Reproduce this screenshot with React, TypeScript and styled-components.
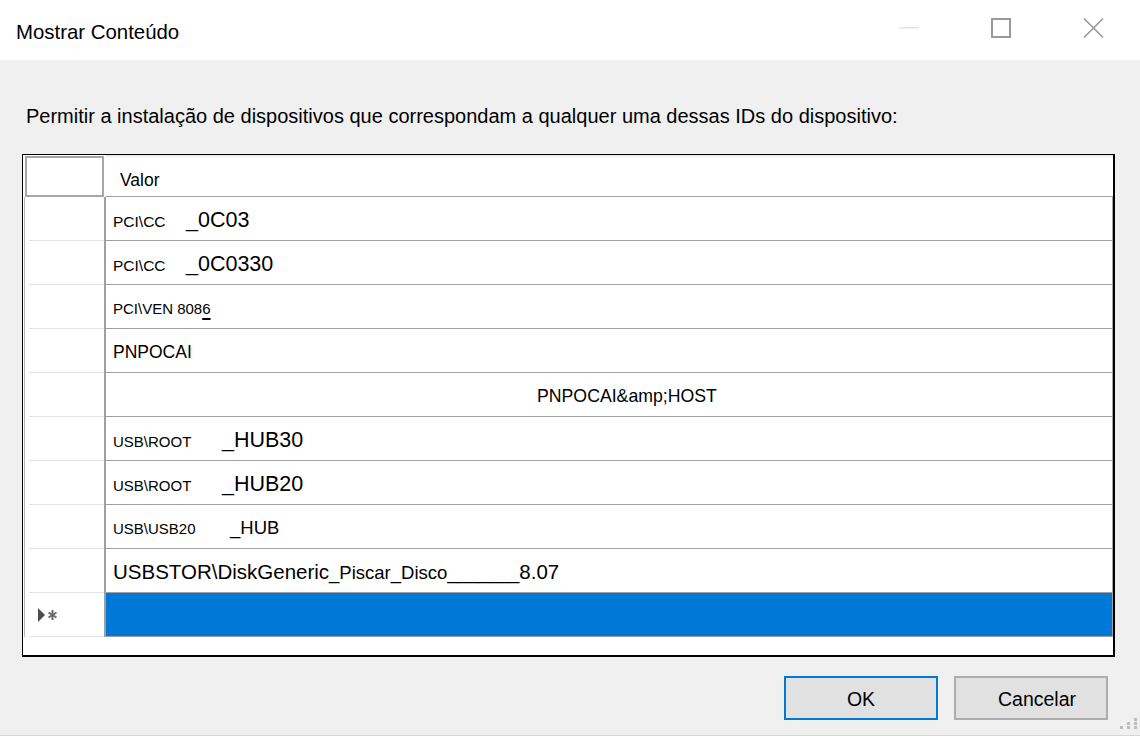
import React from "react";
import styled, { createGlobalStyle } from "styled-components";

const GlobalStyle = createGlobalStyle`
  html, body { margin: 0; padding: 0; }
  body {
    background: #f0f0f0;
    font-family: "Liberation Sans", Arial, sans-serif;
    color: #000;
  }
`;

const Window = styled.div`
  position: relative;
  width: 1140px;
  height: 736px;
  background: #f0f0f0;
  overflow: hidden;
  display: flex;
  flex-direction: column;
  border-bottom: 1px solid #d6d6d6;
  box-sizing: border-box;
`;

const TitleBar = styled.div`
  height: 60px;
  flex: none;
  background: #fff;
  display: flex;
  align-items: center;
  padding-left: 16px;
  box-sizing: border-box;
`;

const Title = styled.div`
  flex: 1;
  font-size: 20.4px;
  padding-top: 5px;
`;

const Controls = styled.div`
  align-self: flex-start;
  margin-top: 18px;
  margin-right: 1px;
  display: flex;
`;

const ControlButton = styled.div`
  width: 92px;
  height: 20px;
  display: flex;
  justify-content: center;
`;

const Body = styled.div`
  flex: 1;
  display: flex;
  flex-direction: column;
  padding: 44px 0 0 22px;
`;

const Prompt = styled.div`
  font-size: 20px;
  line-height: 24px;
  padding-left: 4px;
`;

const Grid = styled.div`
  margin-top: 26px;
  width: 1093px;
  height: 503px;
  box-sizing: border-box;
  background: #fff;
  border-style: solid;
  border-color: #000;
  border-width: 1px 2px 2px 1px;
  padding-left: 1px;
  display: flex;
  flex-direction: column;
`;

const Row = styled.div<{ $h: number }>`
  display: grid;
  grid-template-columns: 82px 1007px;
  height: ${(p) => p.$h}px;
`;

const Corner = styled.div`
  margin: 1px 2px 0 1px;
  border: 2px solid #a6a6a6;
  box-sizing: border-box;
`;

const HeaderCell = styled.div`
  border-top: 2px solid #ececec;
  border-bottom: 1px solid #a0a0a0;
  font-size: 17.5px;
  padding: 7px 0 0 14px;
  display: flex;
  align-items: center;
  box-sizing: border-box;
`;

const RowHead = styled.div`
  box-sizing: border-box;
  border-left: 1px solid #b8b8b8;
  border-right: 2px solid #a0a0a0;
  background: linear-gradient(#e3e3e3, #e3e3e3) no-repeat 4px 100% / calc(100% - 4px) 1px, #fff;
  display: flex;
  align-items: center;
  padding-left: 12px;
`;

const Cell = styled.div<{ $selected?: boolean; $indent?: number }>`
  box-sizing: border-box;
  border-right: 1px solid #a0a0a0;
  border-bottom: 1px solid #a0a0a0;
  background: ${(p) => (p.$selected ? "#0078d7" : "#fff")};
  display: flex;
  align-items: center;
  padding-top: 3px;
  padding-left: ${(p) => p.$indent ?? 7}px;
`;

const Line = styled.div`
  display: flex;
  align-items: baseline;
  white-space: pre;
`;

const Seg = styled.span<{ $size: number; $w?: number }>`
  font-size: ${(p) => p.$size}px;
  ${(p) => (p.$w ? `display: inline-block; width: ${p.$w}px;` : "")}
`;

const Under = styled.span`
  text-decoration: underline;
  text-decoration-thickness: 1.5px;
  text-underline-offset: 4px;
`;

const Filler = styled.div`
  flex: 1;
`;

const ButtonRow = styled.div`
  margin-top: 19px;
  display: flex;
  justify-content: flex-end;
  gap: 16px;
  padding-right: 32px;
`;

const Button = styled.div<{ $primary?: boolean; $shift?: number }>`
  width: 154px;
  height: 44px;
  box-sizing: border-box;
  border: 2px solid ${(p) => (p.$primary ? "#0078d7" : "#adadad")};
  background: #e1e1e1;
  font-size: 19.5px;
  display: flex;
  align-items: center;
  justify-content: center;
  padding-top: 3px;
  padding-left: ${(p) => p.$shift ?? 0}px;
`;

const Grip = styled.svg`
  position: absolute;
  right: 2px;
  bottom: 5px;
`;

type Part = { t: string; s: number; w?: number; u?: string };
type Entry = { parts: Part[]; indent?: number };

const entries: Entry[] = [
  { parts: [{ t: "PCI\\CC", s: 15.5, w: 73 }, { t: "_0C03", s: 21.5 }] },
  { parts: [{ t: "PCI\\CC", s: 15.5, w: 73 }, { t: "_0C0330", s: 21.5 }] },
  { parts: [{ t: "PCI\\VEN 808", s: 15, u: "6" }] },
  { parts: [{ t: "PNPOCAI", s: 17.5 }] },
  { parts: [{ t: "PNPOCAI&amp;HOST", s: 17.7 }], indent: 431 },
  { parts: [{ t: "USB\\ROOT", s: 15, w: 109 }, { t: "_HUB30", s: 21.5 }] },
  { parts: [{ t: "USB\\ROOT", s: 15, w: 109 }, { t: "_HUB20", s: 21.5 }] },
  { parts: [{ t: "USB\\USB20", s: 15, w: 117 }, { t: "_HUB", s: 18.5 }] },
  {
    parts: [
      { t: "USBSTOR\\DiskGeneric", s: 20.5 },
      { t: "_Piscar_Disco_______", s: 18.5 },
      { t: "8.07", s: 20.5 },
    ],
  },
];

const NewRowMark = () => (
  <svg width="22" height="16" viewBox="0 0 22 16">
    <polygon points="1,1 8,8 1,15" fill="#4d4d4d" />
    <g stroke="#6a6a6a" strokeWidth="2">
      <line x1="15.5" y1="3" x2="15.5" y2="13" />
      <line x1="11.5" y1="5.5" x2="19.5" y2="10.5" />
      <line x1="11.5" y1="10.5" x2="19.5" y2="5.5" />
    </g>
  </svg>
);

export default function App() {
  return (
    <>
      <GlobalStyle />
      <Window>
        <TitleBar>
          <Title>Mostrar Conteúdo</Title>
          <Controls>
            <ControlButton>
              <svg width="20" height="20" viewBox="0 0 20 20">
                <line x1="0" y1="9.75" x2="20" y2="9.75" stroke="#e4e4e4" strokeWidth="1.5" />
              </svg>
            </ControlButton>
            <ControlButton>
              <svg width="20" height="20" viewBox="0 0 20 20">
                <rect x="1" y="1" width="18" height="18" fill="none" stroke="#999" strokeWidth="2" />
              </svg>
            </ControlButton>
            <ControlButton>
              <svg width="21" height="20" viewBox="0 0 21 20">
                <g stroke="#999" strokeWidth="1.5">
                  <line x1="1" y1="0.5" x2="20" y2="19.5" />
                  <line x1="20" y1="0.5" x2="1" y2="19.5" />
                </g>
              </svg>
            </ControlButton>
          </Controls>
        </TitleBar>

        <Body>
          <Prompt>
            Permitir a instalação de dispositivos que correspondam a qualquer uma dessas IDs do dispositivo:
          </Prompt>

          <Grid>
            <Row $h={42}>
              <Corner />
              <HeaderCell>Valor</HeaderCell>
            </Row>
            {entries.map((e, i) => (
              <Row $h={44} key={i}>
                <RowHead />
                <Cell $indent={e.indent}>
                  <Line>
                    {e.parts.map((p, j) => (
                      <Seg key={j} $size={p.s} $w={p.w}>
                        {p.t}
                        {p.u && <Under>{p.u}</Under>}
                      </Seg>
                    ))}
                  </Line>
                </Cell>
              </Row>
            ))}
            <Row $h={44}>
              <RowHead>
                <NewRowMark />
              </RowHead>
              <Cell $selected />
            </Row>
            <Filler />
          </Grid>

          <ButtonRow>
            <Button $primary>OK</Button>
            <Button $shift={12}>Cancelar</Button>
          </ButtonRow>
        </Body>

        <Grip width="18" height="12" viewBox="0 0 18 12">
          <g fill="#bcbcbc">
            <rect x="14" y="0" width="3" height="3" />
            <rect x="7" y="4" width="3" height="3" />
            <rect x="14" y="4" width="3" height="3" />
            <rect x="0" y="8" width="3" height="3" />
            <rect x="7" y="8" width="3" height="3" />
            <rect x="14" y="8" width="3" height="3" />
          </g>
        </Grip>
      </Window>
    </>
  );
}
